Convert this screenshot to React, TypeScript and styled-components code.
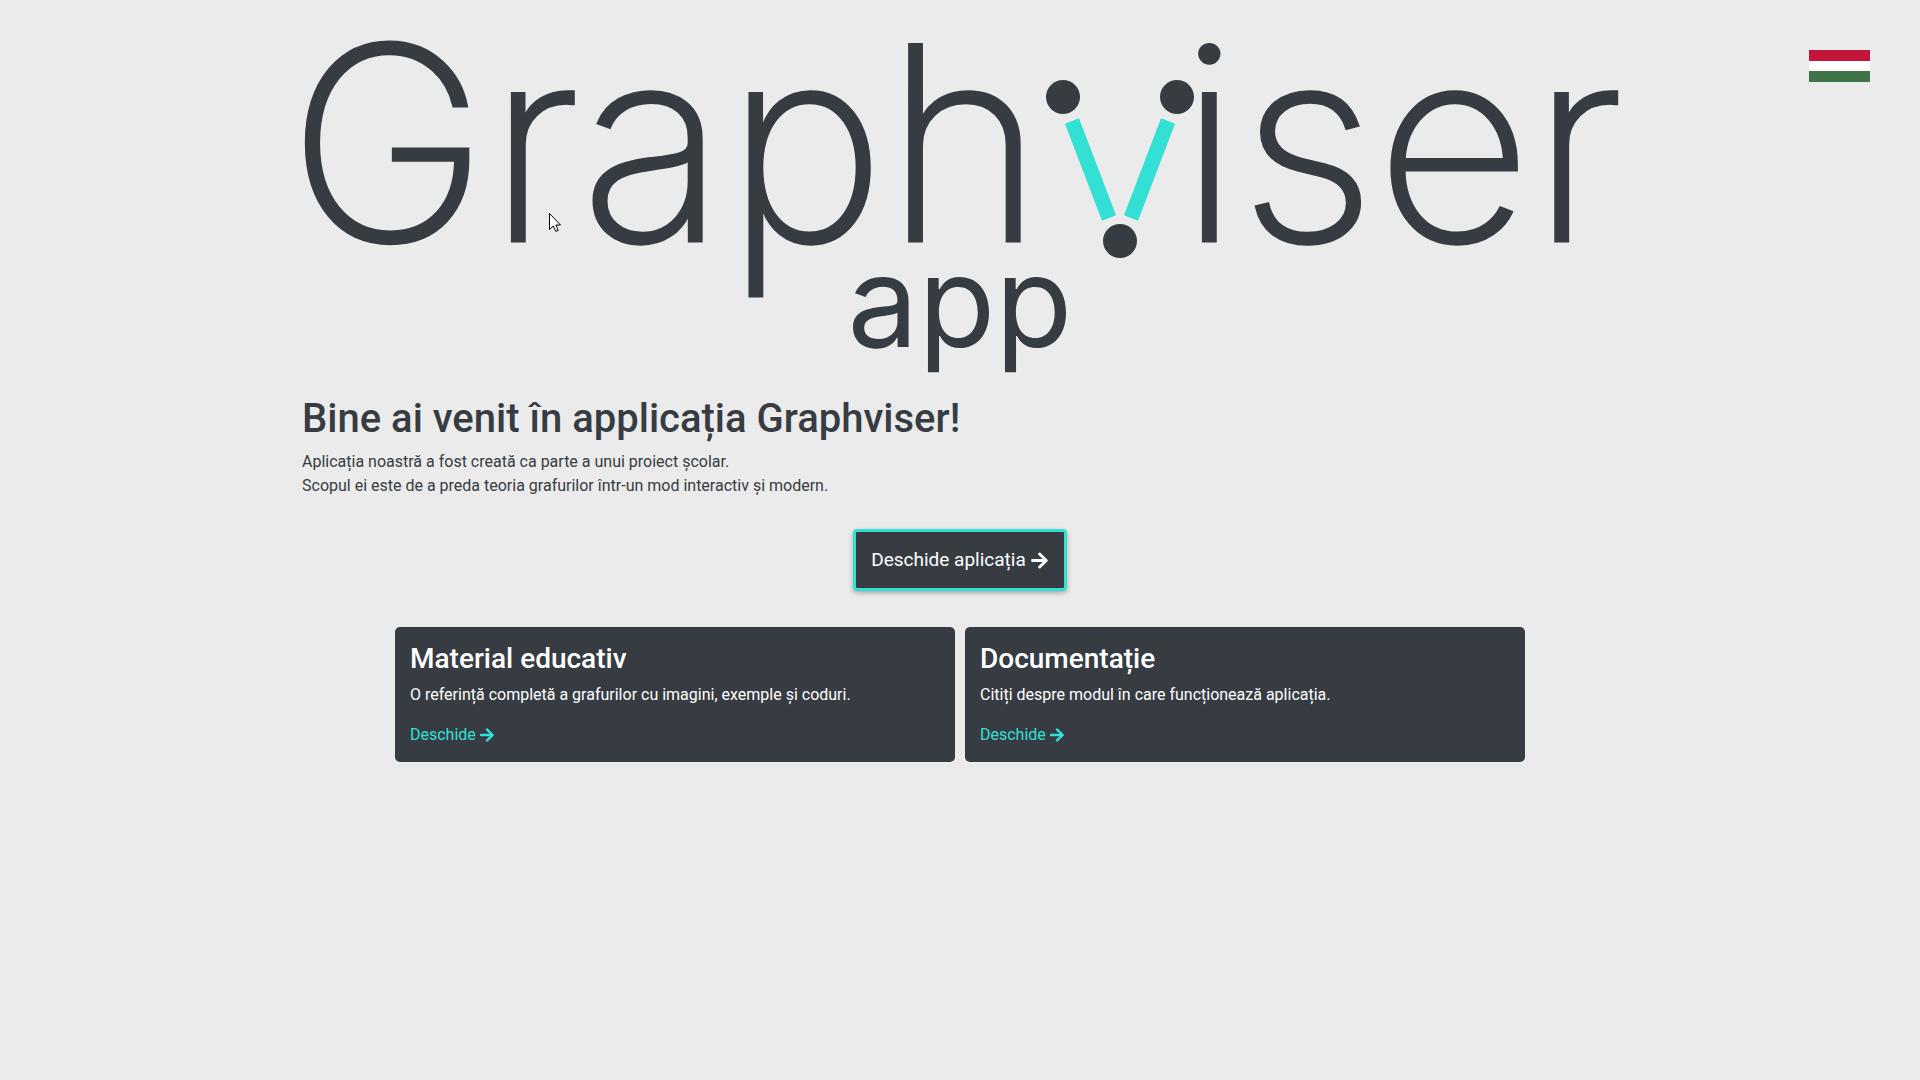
import React from 'react';
import styled, { createGlobalStyle } from 'styled-components';
import { FaArrowRight } from 'react-icons/fa';

const ink = '#363c42';
const accent = '#33e0d6';

const GlobalStyle = createGlobalStyle`
  *, *::before, *::after { box-sizing: border-box; }
  body {
    margin: 0;
    background: #ebebeb;
    color: ${ink};
    font: 400 16px/24px Roboto, "Noto Sans", sans-serif;
  }
`;

const Page = styled.div`
  position: relative;
  min-height: 100vh;
  padding: 38px 24px 48px;
`;

const LanguageButton = styled.button`
  position: absolute;
  top: 50px;
  right: 50px;
  display: block;
  padding: 0;
  border: 0;
  background: none;
  cursor: pointer;

  svg { display: block; }
`;

const Main = styled.main`
  width: 100%;
  max-width: 1316px;
  margin: 0 auto;
`;

const Logo = styled.svg`
  display: block;
  width: 100%;
  height: auto;
  overflow: visible;
  fill: ${ink};
  font-family: Inter, "Liberation Sans", sans-serif;
`;

const Wordmark = styled.text`
  font-size: 270px;
  font-weight: 200;
  stroke: ${ink};
  stroke-width: 3px;
`;

const Subline = styled.text`
  font-size: 126px;
  font-weight: 400;
`;

const Pointer = styled.svg`
  position: absolute;
  top: 213px;
  left: 549px;
  pointer-events: none;
`;

const Title = styled.h1`
  margin: 20px 0 7px;
  font-size: 40px;
  line-height: 48px;
  font-weight: 500;
`;

const Intro = styled.p`
  margin: 0;
`;

const Launch = styled.div`
  display: flex;
  justify-content: center;
  margin: 31px 0 36px;
`;

const LaunchLink = styled.a`
  display: flex;
  align-items: center;
  gap: 4px;
  padding: 16px 15px;
  border: 3px solid ${accent};
  border-radius: 4px;
  background: ${ink};
  box-shadow: 0 2px 5px rgba(0, 0, 0, 0.3);
  color: #fff;
  font-size: 19px;
  line-height: 24px;
  text-decoration: none;
`;

const Cards = styled.section`
  display: grid;
  grid-template-columns: 1fr 1fr;
  gap: 10px;
  max-width: 1130px;
  margin: 0 auto;
`;

const Card = styled.article`
  padding: 16px 15px 15px;
  border-radius: 5px;
  background: ${ink};
  color: #fff;
`;

const CardTitle = styled.h2`
  margin: 0 0 8px;
  font-size: 28px;
  line-height: 32px;
  font-weight: 500;
`;

const CardText = styled.p`
  margin: 0 0 16px;
`;

const CardLink = styled.a`
  display: flex;
  align-items: center;
  gap: 3px;
  width: fit-content;
  color: ${accent};
  text-decoration: none;
`;

const cards = [
  {
    title: 'Material educativ',
    text: 'O referință completă a grafurilor cu imagini, exemple și coduri.',
    href: '#material',
  },
  {
    title: 'Documentație',
    text: 'Citiți despre modul în care funcționează aplicația.',
    href: '#documentatie',
  },
];

function GraphviserLogo() {
  return (
    <Logo viewBox="0 0 1316 337" role="img" aria-label="Graphviser app">
      <Wordmark x="-14" y="203">Graph</Wordmark>
      <g stroke={accent} strokeWidth="15">
        <path d="M770 83 807 180" />
        <path d="M866 83 829 180" />
      </g>
      <circle cx="761" cy="59" r="17" />
      <circle cx="875" cy="59" r="17" />
      <circle cx="818" cy="203" r="17" />
      <Wordmark x="877" y="203">iser</Wordmark>
      <Subline x="658" y="309" textAnchor="middle">app</Subline>
    </Logo>
  );
}

export default function App() {
  return (
    <>
      <GlobalStyle />
      <Page>
        <LanguageButton type="button" aria-label="Magyar">
          <svg width="61" height="32" viewBox="0 0 61 32">
            <rect width="61" height="32" fill="#fff" />
            <rect width="61" height="11" fill="#c3143a" />
            <rect y="21" width="61" height="11" fill="#3f7348" />
          </svg>
        </LanguageButton>
        <Main>
          <GraphviserLogo />
          <Title>Bine ai venit în applicația Graphviser!</Title>
          <Intro>
            Aplicația noastră a fost creată ca parte a unui proiect școlar.
            <br />
            Scopul ei este de a preda teoria grafurilor într-un mod interactiv și modern.
          </Intro>
          <Launch>
            <LaunchLink href="#app">
              Deschide aplicația <FaArrowRight />
            </LaunchLink>
          </Launch>
          <Cards>
            {cards.map((card) => (
              <Card key={card.title}>
                <CardTitle>{card.title}</CardTitle>
                <CardText>{card.text}</CardText>
                <CardLink href={card.href}>
                  Deschide <FaArrowRight />
                </CardLink>
              </Card>
            ))}
          </Cards>
        </Main>
        <Pointer width="12" height="19" viewBox="0 0 12 19" aria-hidden="true">
          <path
            d="M.5 .5V16.5L4.2 13 6.8 18.4 9.3 17.3 6.9 12H11.5Z"
            fill="#fff"
            stroke="#000"
          />
        </Pointer>
      </Page>
    </>
  );
}
